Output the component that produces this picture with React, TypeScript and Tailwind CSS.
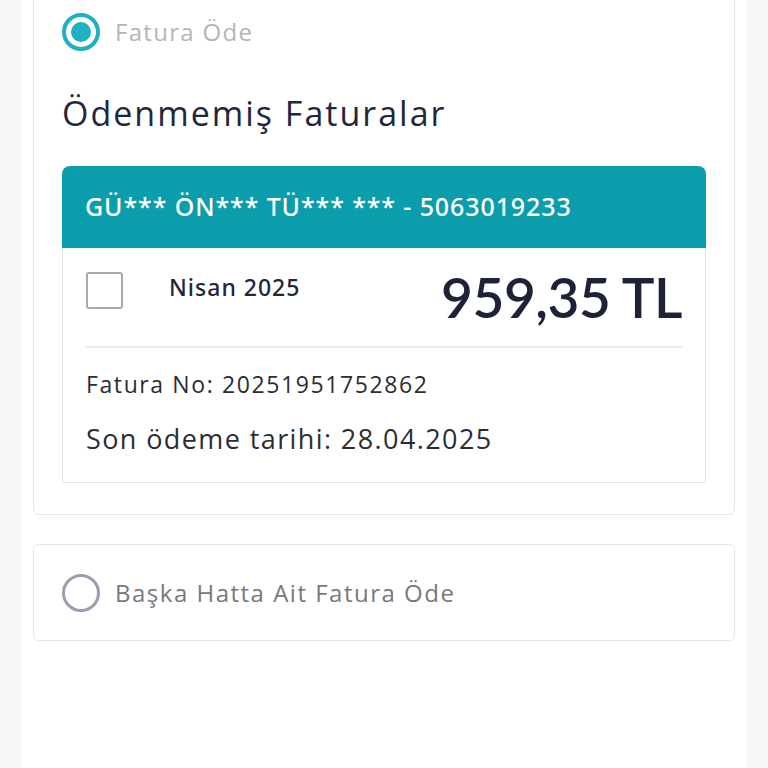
import React from 'react';

export default function App() {
  return (
    <div className="min-h-[768px] bg-[#f6f7f9] flex justify-center" style={{ fontFamily: '"Open Sans", "Noto Sans", sans-serif' }}>
      <div className="w-[724px] min-h-[768px] bg-white px-[11px] overflow-hidden">
        <div className="-mt-[20px] bg-white border border-[#e6e7ea] rounded-[6px] px-[28px] pt-[31px] pb-[31px]">
          <div className="flex items-center gap-[15px] h-[40px]">
            <span className="w-[38px] h-[38px] rounded-full border-[4px] border-[#1fb1c2] flex items-center justify-center">
              <span className="w-[20px] h-[20px] rounded-full bg-[#1fb1c2]" />
            </span>
            <span className="text-[24px] text-[#b5b5b8] tracking-[1.3px]">Fatura Öde</span>
          </div>
          <h1 className="mt-[39px] text-[34px] leading-[44px] text-[#23263a] tracking-[2px]">Ödenmemiş Faturalar</h1>
          <div className="mt-[31px] rounded-t-[8px] overflow-hidden">
            <div className="bg-[#0b9dac] h-[82px] flex items-center px-[23px]">
              <span className="text-white text-[25px] font-medium tracking-[0.9px]" style={{ fontFamily: '"Noto Sans", sans-serif' }}>GÜ*** ÖN*** TÜ*** *** - 5063019233</span>
            </div>
            <div className="border border-t-0 border-[#e3e4e7] px-[23px] pt-[23px] pb-[25px]">
              <div className="flex items-start">
                <span className="mt-[1px] w-[37px] h-[37px] rounded-[3px] border-2 border-[#a7a9ad]" />
                <span className="ml-[46px] -mt-[1px] text-[23px] font-medium text-[#23263a] tracking-[1px]" style={{ fontFamily: '"Noto Sans", sans-serif' }}>Nisan 2025</span>
                <span className="ml-auto -mt-[6px] text-[55px] leading-[64px] font-semibold text-[#1e2236] tracking-[-0.5px]" style={{ fontFamily: 'Lato, sans-serif' }}>959,35 TL</span>
              </div>
              <div className="mt-[17px] h-[2px] bg-[#ececee]" />
              <div className="mt-[20px] text-[23px] leading-[32px] text-[#2b2d35] tracking-[1.6px]">Fatura No: 20251951752862</div>
              <div className="mt-[21px] text-[27px] leading-[36px] text-[#2b2d35] tracking-[1.4px]">Son ödeme tarihi: 28.04.2025</div>
            </div>
          </div>
        </div>
        <div className="mt-[29px] bg-white border border-[#e6e7ea] rounded-[6px] px-[28px] h-[97px] flex items-center gap-[15px]">
          <span className="w-[38px] h-[38px] rounded-full border-[3px] border-[#9b9db3]" />
          <span className="text-[24px] text-[#78787c] tracking-[1.5px]">Başka Hatta Ait Fatura Öde</span>
        </div>
      </div>
    </div>
  );
}
